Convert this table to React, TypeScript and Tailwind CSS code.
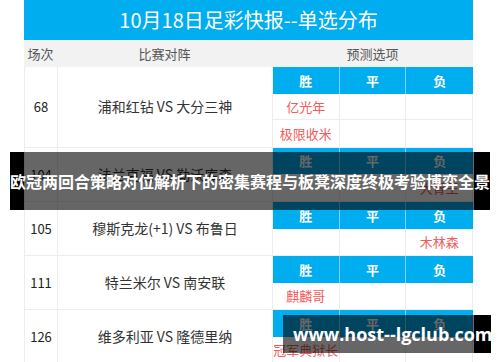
import React from 'react';

type Pick = { col: 0 | 1 | 2; name: string };
type Match = { no: string; teams: string; picks: Pick[] };

const matches: Match[] = [
  { no: '68', teams: '浦和红钻 VS 大分三神', picks: [{ col: 0, name: '亿光年' }, { col: 0, name: '极限收米' }] },
  { no: '104', teams: '法兰克福 VS 勒沃库森', picks: [{ col: 2, name: '大胃王' }] },
  { no: '105', teams: '穆斯克龙(+1) VS 布鲁日', picks: [{ col: 2, name: '木林森' }] },
  { no: '111', teams: '特兰米尔 VS 南安联', picks: [{ col: 0, name: '麒麟哥' }] },
  { no: '126', teams: '维多利亚 VS 隆德里纳', picks: [{ col: 0, name: '冠军典狱长' }] },
];

const labels = ['胜', '平', '负'];

const MatchRow: React.FC<{ m: Match }> = ({ m }) => (
  <div className="flex border-b border-l border-[#ededed]">
    <div className="w-[33px] flex items-center justify-center border-r border-[#ededed] text-[13px] text-[#222]">
      {m.no}
    </div>
    <div className="w-[215px] flex items-center justify-center border-r border-[#ededed] text-[14px] text-[#333]">
      {m.teams}
    </div>
    <div className="flex-1 flex flex-col">
      <div className="grid grid-cols-3 h-[26.6px] bg-[#00adef] text-white text-[13px] font-bold">
        {labels.map((l, i) => (
          <div
            key={l}
            className={`flex items-center justify-center ${i < 2 ? 'border-r border-[#7fd3f5]' : ''}`}
          >
            {l}
          </div>
        ))}
      </div>
      {m.picks.map((p, idx) => (
        <div
          key={idx}
          className={`grid grid-cols-3 h-[26.6px] ${idx < m.picks.length - 1 ? 'border-b border-[#ededed]' : ''}`}
        >
          {[0, 1, 2].map((c) => (
            <div
              key={c}
              className={`flex items-center justify-center text-[13px] text-[#f35b5b] ${c < 2 ? 'border-r border-[#ededed]' : 'border-r border-[#ededed]'}`}
            >
              {p.col === c ? p.name : ''}
            </div>
          ))}
        </div>
      ))}
    </div>
  </div>
);

export default function App() {
  return (
    <div
      className="relative w-[500px] h-[362px] overflow-hidden bg-white"
      style={{ fontFamily: '"Noto Sans CJK SC", "Noto Sans", sans-serif' }}
    >
      <div className="ml-[24px] w-[449px]">
        <div className="h-[40px] bg-[#00adef] flex items-center justify-center text-white text-[20px]">
          10月18日足彩快报--单选分布
        </div>
        <div className="h-[27px] flex bg-[#f2f2f2] text-[13px] text-[#555]">
          <div className="w-[33px] flex items-center justify-center">场次</div>
          <div className="w-[215px] flex items-center justify-center">比赛对阵</div>
          <div className="flex-1 flex items-center justify-center">预测选项</div>
        </div>
        {matches.map((m) => (
          <MatchRow key={m.no} m={m} />
        ))}
      </div>

      {/* banner overlays */}
      <div className="absolute left-[10px] top-[152px] w-[480px] h-[58px] flex">
        <div className="w-[14px] bg-black" />
        <div className="flex-1 bg-black/60" />
        <div className="w-[16px] bg-black" />
        <div className="absolute inset-0 flex items-center justify-center text-white text-[16px] font-bold whitespace-nowrap">
          欧冠两回合策略对位解析下的密集赛程与板凳深度终极考验博弈全景
        </div>
      </div>

      <div className="absolute left-[283px] top-[315px] w-[208px] h-[38px] flex">
        <div className="flex-1 bg-black/60" />
        <div className="w-[17px] bg-black" />
        <div
          className="absolute inset-0 flex items-center pl-[10px] text-white text-[18px] font-bold whitespace-nowrap"
          style={{ fontFamily: '"Open Sans", "Noto Sans", sans-serif' }}
        >
          www.host--lgclub.com
        </div>
      </div>
    </div>
  );
}
